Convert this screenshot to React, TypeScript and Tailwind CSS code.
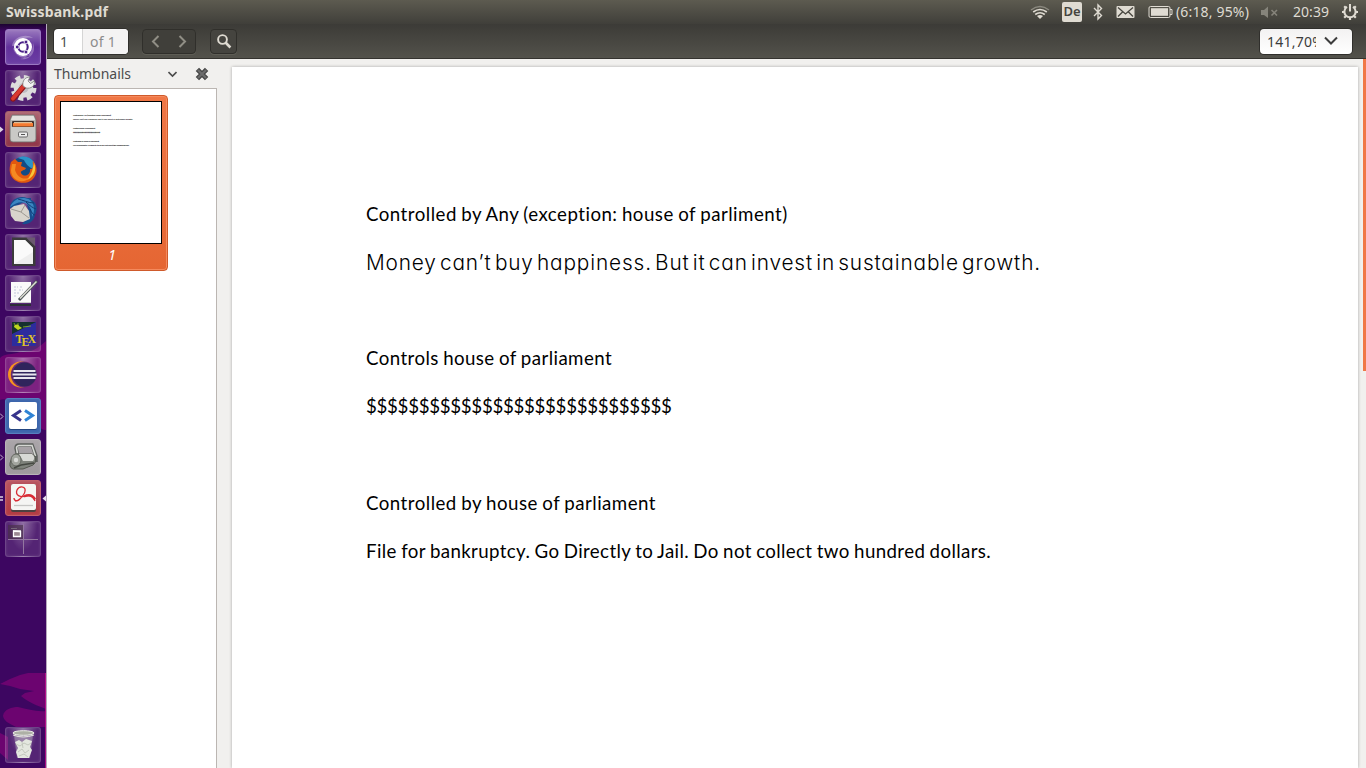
import React, { useLayoutEffect, useRef, useState } from "react";

/* Text that is tracked so that it fills an exact width. */
function FitText({ text, width, className = "" }: { text: string; width: number; className?: string }) {
  const ref = useRef<HTMLSpanElement>(null);
  const [spacing, setSpacing] = useState(0);
  useLayoutEffect(() => {
    if (!ref.current) return;
    const natural = ref.current.getBoundingClientRect().width - spacing * text.length;
    setSpacing((width - natural) / text.length);
  }, [text, width]);
  return (
    <span ref={ref} className={`inline-block whitespace-pre ${className}`} style={{ letterSpacing: `${spacing}px` }}>
      {text}
    </span>
  );
}

const tile =
  "relative flex h-9 w-9 shrink-0 items-center justify-center rounded-[3px] border shadow-[inset_0_0_3px_rgba(255,255,255,0.12)]";
const plain = "border-white/15 bg-[radial-gradient(ellipse_at_50%_0%,rgba(255,255,255,0.42),rgba(255,255,255,0.12)_60%,rgba(255,255,255,0.12))]";

function Tile({ look = plain, children, left, right }: { look?: string; children: React.ReactNode; left?: "solid" | "hollow" | "double"; right?: boolean }) {
  return (
    <div className={`${tile} ${look}`}>
      <svg className="h-[34px] w-[34px]" viewBox="0 0 34 34">{children}</svg>
      {left && (
        <svg className="absolute -left-1.5 top-[14px] h-[7px] w-[4px]" viewBox="0 0 4 7">
          {left === "solid" && <path d="M0 .5 3.5 3.5 0 6.5Z" fill="#ddd5e2" />}
          {left === "hollow" && <path d="M0 .5 3 3.5 0 6.5" fill="none" stroke="#c5b3cf" />}
          {left === "double" && <path d="M0 2h3M0 5h3" stroke="#ddd5e2" strokeWidth="1.6" />}
        </svg>
      )}
      {right && (
        <svg className="absolute -right-[6px] top-[14px] h-[7px] w-[4px]" viewBox="0 0 4 7">
          <path d="M4 .5 .5 3.5 4 6.5Z" fill="#e8e0ee" />
        </svg>
      )}
    </div>
  );
}

function Launcher() {
  return (
    <aside className="relative flex w-[47px] shrink-0 flex-col gap-[5px] overflow-hidden border-r border-[#b7a9bd] bg-[#3d0661] pl-[5px] pt-[5px] pb-[5px]">
      <svg className="absolute inset-0 h-[744px] w-[46px]" viewBox="0 24 46 744">
        <defs>
          <linearGradient id="shade" x1="0" y1="0" x2="0" y2="1">
            <stop offset="0" stopColor="#1c0330" />
            <stop offset="1" stopColor="#1c0330" stopOpacity="0" />
          </linearGradient>
        </defs>
        <rect y="24" width="46" height="7" fill="url(#shade)" />
        <path d="M46 341C36 350 30 353 20 352C12 355 4 353 0 358V400C10 396 20 410 34 420C38 425 42 431 46 430Z" fill="#6c0470" />
        <path d="M0 684 10 679 20 675 28 673H46V709C38 706 28 702 21 696L25 693 34 691 20 689 10 686Z" fill="#6c0470" />
        <path d="M3 716C4 709 12 707 18 707C28 709 36 712 46 711V727H16C8 723 4 721 3 716ZM0 733 8 737V760L0 753Z" fill="#6c0470" />
        <path d="M45.5 673V768" stroke="#c4138e" opacity=".8" />
      </svg>

      <Tile look="border-[#9a78c2] bg-gradient-to-b from-[#9a78be] via-[#62309b] to-[#6c3fa4]">
        <path d="M6 16C7 7 20 3 27 8C21 6 13 9 11 16M27 13C31 23 23 31 14 29C22 28 27 22 27 13M7 18C9 26 17 30 24 26" fill="#fff" opacity=".3" />
        <circle cx="17" cy="17" r="9" fill="#fff" />
        <circle cx="17" cy="17" r="4.7" fill="none" stroke="#4a2188" strokeWidth="2.1" />
        <g fill="#4a2188" stroke="#fff" strokeWidth=".8">
          <circle cx="11.2" cy="17" r="1.9" /><circle cx="20" cy="12" r="1.9" /><circle cx="20" cy="22" r="1.9" />
        </g>
      </Tile>

      <Tile>
        <circle cx="17.5" cy="17" r="10.5" fill="none" stroke="#dcdcdc" strokeWidth="5" strokeDasharray="4.9 3.35" />
        <circle cx="17.5" cy="17" r="9.8" fill="#ddd" /><circle cx="17.5" cy="17" r="5" fill="#bfbfc4" />
        <path d="M7 28 19 14" stroke="#8b1419" strokeWidth="5.4" strokeLinecap="round" />
        <path d="M7 27.5 18.5 14" stroke="#d9382f" strokeWidth="3.8" strokeLinecap="round" />
        <path d="M17 15C16 10 19 6 24 6L22 10 24.5 12.5 28.5 10C29 15 25 18 20 17Z" fill="#f3f3f3" stroke="#777" strokeWidth=".8" />
      </Tile>

      <Tile left="solid" look="border-[#a3606c] bg-gradient-to-b from-[#ad6672] to-[#8f3347]">
        <path d="M6 3H28L30 8V27Q30 30 27 30H7Q4 30 4 27V8Z" fill="#b8b8b5" stroke="#70706d" strokeWidth=".7" />
        <path d="M6.5 4H27.5L29 8H5Z" fill="#e3e3df" />
        <rect x="6" y="9" width="22" height="6" rx="1" fill="#42332d" />
        <path d="M7 14.5V11H27V14.5" fill="#f47a31" /><path d="M8 10.7H26" stroke="#ffe0b4" />
        <path d="M5 15H29V27Q29 29 27 29H7Q5 29 5 27Z" fill="#c9c9c6" />
        <rect x="12.5" y="20" width="9" height="5" rx="1.2" fill="#eee" stroke="#666" /><path d="M15 22.5h4" stroke="#555" />
      </Tile>

      <Tile>
        <circle cx="17.5" cy="16.5" r="12.8" fill="#124b85" />
        <path d="M12 5C18 1 30 5 30 16C26 17 20 12 18 7Z" fill="#2b93c8" />
        <path d="M5 9 9 6 12 9 16 9 15 13 20 15C19 18 14 17 15 20C18 25 25 22 24 16C29 17 26 8 27 8C31 13 33 20 26 27C18 33 6 29 4 20C3 16 4 12 5 9Z" fill="#e2580f" />
        <path d="M28 10C31 17 28 24 21 27C26 21 27 15 28 10Z" fill="#f9c638" />
        <path d="M6 11 10 11 9 17C11 24 18 28 24 24C18 32 5 28 5 17Z" fill="#f58a22" />
      </Tile>

      <Tile>
        <path d="M4 14C4 5 14 1 21 4L25 4 25 6C29 7 33 13 29 21C28 27 23 31 16 30C20 26 23 24 23 18L20 7 8 13Z" fill="#174f90" />
        <path d="M4 13C8 4 17 2 24 6C29 10 29 18 26 23C26 16 24 11 19 9C14 7 10 9 4 13Z" fill="#3b86c2" />
        <path d="M4 15 8 12 18 10 23 17 24 25 17 28 9 27 5 22Z" fill="#d8d4cc" />
        <path d="M5 15 15 18 19 11M15 18 23 24" fill="none" stroke="#9d9992" />
        <path d="M12 5C17 6 22 9 28 9M20 8C24 12 27 14 30 15M24 15C26 19 27 21 29 21" stroke="#123c75" fill="none" />
      </Tile>

      <Tile>
        <path d="M6 2.5H21L29.5 11V31H6Z" fill="#3b3b3b" />
        <path d="M8 5H19L27 13V29H8Z" fill="#eee" />
        <path d="M20 2.5H29V11Z" fill="#6b5a70" />
        <path d="M8 5H19L27 13V17L8 29Z" fill="#fafafa" />
      </Tile>

      <Tile>
        <path d="M5 6H25V27H5Z" fill="#fafafa" /><path d="M4 28H25V30H4Z" fill="#2c2f37" />
        <path d="M4 26.5H25" stroke="#ccc" />
        <path d="M8 11h4m2 0h3m-9 3h3m2 0h4m-9 3h5m-5 3h3" stroke="#c2c5d9" strokeWidth="1.1" strokeDasharray="2 1" />
        <path d="M13 24 31 5" stroke="#4b5255" strokeWidth="3" /><path d="M14 22.5 30.5 5.5" stroke="#dcddd4" strokeWidth="1.5" />
      </Tile>

      <Tile>
        <rect x="6" y="5" width="24" height="24" fill="#2c2c9e" /><path d="M6 5H30L24 8 16 12 6 17Z" fill="#16302f" />
        <path d="M8 10C8 7 13 7 13 9L16 11 12 13Z" fill="#bed51f" /><path d="M8 6 9 8M17 10 25 9M12 6 12 8" stroke="#8cba20" strokeWidth=".8" />
        <g fill="#e3c425" fontFamily="Liberation Serif, serif" fontWeight="bold" fontSize="11.5"><text x="9.5" y="26">T</text><text x="15.6" y="29">E</text><text x="21.8" y="26">X</text></g>
      </Tile>

      <Tile>
        <circle cx="15" cy="16.5" r="13" fill="#f7941e" /><circle cx="17.8" cy="16.5" r="13" fill="#6b2a72" />
        <circle cx="18.5" cy="16.5" r="12" fill="#30245c" />
        <path d="M7.5 13H29.5M6.5 16.5H30.5M7.5 20H29.5" stroke="#e7e4ed" strokeWidth="1.8" />
      </Tile>

      <Tile left="hollow" look="border-[#557fc0] bg-[#3c65ac]">
        <rect x="3" y="4" width="28" height="27" rx="2" fill="#23457f" /><rect x="3" y="3" width="28" height="27" rx="2" fill="#fff" />
        <path d="M15 11.5 7.5 16.5 15 21.5" fill="none" stroke="#37358c" strokeWidth="3" /><path d="M19 11.5 26.5 16.5 19 21.5" fill="none" stroke="#2f83d5" strokeWidth="3" />
      </Tile>

      <Tile left="hollow" look="border-[#b9b4b8] bg-gradient-to-b from-[#aaa5a9] to-[#9e999d]">
        <path d="M12 17 10 8Q10 5 13 5H26L30 16V22" fill="none" stroke="#5d605d" strokeWidth="3.5" />
        <path d="M12 17 10.5 8Q10.5 6 13 5.5H26L29.5 16" fill="none" stroke="#d5d7d3" strokeWidth="1.6" />
        <path d="M7 17Q8 13 13 14H26Q31 16 29 23L27 25 17 29H7Q2 27 5 20Z" fill="#7e827b" stroke="#555850" />
        <path d="M13 14H26Q30 17 27 21H17Z" fill="#d8d9d5" /><ellipse cx="10" cy="20" rx="5" ry="6" fill="#a3a69f" stroke="#656861" />
        <circle cx="10" cy="20" r="2.2" fill="#d9dad7" /><path d="M8 28 15 25 28 23" stroke="#454842" strokeWidth="1.5" fill="none" />
      </Tile>

      <Tile left="double" right look="border-[#c2606a] bg-gradient-to-b from-[#b75360] to-[#b33a42]">
        <rect x="5" y="3" width="25" height="28" rx="2" fill="#4d4140" /><rect x="5" y="3" width="25" height="26" rx="2" fill="#f5f5f3" />
        <path d="M9 20C13 20 20 13 19 8C18 5 13 5 11 9C9 14 14 17 20 15C25 14 28 17 29 20M8 17C8 20 12 21 14 18" fill="none" stroke="#d92c35" strokeWidth="1.3" />
        <path d="M18 15.5C23 13 27 14 29 18.5" stroke="#d92c35" strokeWidth="2.4" fill="none" /><path d="M8 24.5h19" stroke="#c7c7c5" strokeWidth="1.3" />
      </Tile>

      <Tile>
        <rect x="2" y="3" width="15" height="14" fill="#483146" opacity=".65" />
        <path d="M17.5 2V32M2 17.5H32" stroke="#9377a0" />
        <path d="M5 6.5h6" stroke="#766679" /><path d="M7.5 9V14.5H14.5V9.5Z" fill="#9b8992" stroke="#fff" strokeWidth="1.3" /><path d="M7 9.2h8" stroke="#fff" strokeWidth="1.8" />
      </Tile>

      <div className="mt-auto">
        <Tile>
          <path d="M8 7 11 30H24L27 7Z" fill="#d8ddd3" opacity=".35" />
          <ellipse cx="17.5" cy="5" rx="10.5" ry="2.3" fill="#aeb0a6" stroke="#edf0e8" /><path d="M7 7Q17 11 28 7" stroke="#e7e9e0" fill="none" />
          <path d="M9 14 13 12 16 14 20 11 26 13 24 19 26 22 23 30 12 30 10 24 12 20Z" fill="#e4e7df" />
          <path d="M10 16 14 18 18 15 22 17 25 15M12 24 16 21 19 25 23 22M16 14 17 20M13 28 18 26 22 29" stroke="#c3c8bd" fill="none" />
        </Tile>
      </div>
    </aside>
  );
}

function TopPanel() {
  return (
    <header className="flex h-6 shrink-0 items-center bg-gradient-to-b from-[#5d5b50] to-[#403f3a] pl-1.5 text-[#dfdbd2]">
      <FitText text="Swissbank.pdf" width={102} className="text-[14px] leading-6 font-bold" />
      <div className="ml-auto flex h-6 items-center">
        <svg className="h-6 w-[22px]" viewBox="1029 0 22 24" fill="none" stroke="#dfdbd2">
          <path d="M1031 10Q1040 3 1049 10" stroke="#8b897f" strokeWidth="1.5" />
          <path d="M1033.2 12Q1040 7 1046.8 12M1035.2 14.5Q1040 11 1044.8 14.5" strokeWidth="1.7" />
          <path d="M1037 16Q1040 14 1043 16L1040 19Z" fill="#dfdbd2" stroke="none" />
        </svg>
        <span className="ml-[11px] flex h-5 w-5 items-center justify-center rounded-[2px] bg-[#dfdbd2] text-[13px] font-semibold text-[#45443f]">De</span>
        <svg className="ml-[11px] h-6 w-[10px]" viewBox="0 0 10 24" fill="none" stroke="#dfdbd2" strokeWidth="1.4">
          <path d="M1 8 8.5 15.5 5 19V5L8.5 8.5 1 16" />
        </svg>
        <svg className="ml-[13px] h-6 w-[19px]" viewBox="0 0 19 24">
          <rect x=".5" y="6" width="18" height="12" rx="1" fill="#dfdbd2" />
          <path d="M2 7.5 9.5 14 17 7.5M2 16.5 6.5 12M17 16.5 12.5 12" fill="none" stroke="#47463f" strokeWidth="1.3" />
        </svg>
        <svg className="ml-[13px] h-6 w-[25px]" viewBox="0 0 25 24">
          <rect x="1" y="6.5" width="21" height="11" rx="1.5" fill="none" stroke="#dfdbd2" />
          <rect x="3" y="8.2" width="17" height="7.6" fill="#dfdbd2" /><path d="M22 9.5h2v5h-2" fill="none" stroke="#dfdbd2" />
        </svg>
        <FitText text="(6:18, 95%)" width={73} className="ml-[3px] text-[14px] leading-6" />
        <svg className="ml-[12px] h-6 w-[19px]" viewBox="0 0 19 24">
          <path d="M0 10H3L7 6.5V18L3 15H0Z" fill="#86847b" /><path d="M10.5 10 16 15.5M16 10 10.5 15.5" stroke="#86847b" strokeWidth="1.6" />
        </svg>
        <FitText text="20:39" width={36} className="ml-[13px] text-[14px] leading-6" />
        <svg className="ml-[12px] mr-[7px] h-6 w-[18px]" viewBox="0 0 18 24" fill="none" stroke="#dfdbd2">
          <path d="M6 6.9A5.6 5.6 0 1 0 12 6.9" strokeWidth="2" /><path d="M9 4V11.5" strokeWidth="2" />
          <path d="M1 12H4M14 12H17M3.2 17.8 5 16M14.8 17.8 13 16M3.2 6.2 5 8M14.8 6.2 13 8M9 17V20" strokeWidth="2.2" />
        </svg>
      </div>
    </header>
  );
}

function Toolbar() {
  return (
    <div className="flex h-[35px] shrink-0 items-center border-b border-[#34332f] bg-gradient-to-b from-[#3c3b37] to-[#53524b] pl-[7px] pr-[14px] text-[14px]">
      <div className="flex h-[25px] w-[74px] overflow-hidden rounded-[4px] bg-white text-[#4c4c4c] shadow-[0_0_0_1px_#302f2c]">
        <span className="w-[29px] border-r border-[#d5d5d5] pl-1.5 leading-[25px]">1</span>
        <span className="flex-1 bg-[#f4f3f3] pl-[7px] leading-[25px] text-[#8c8c8c]"><FitText text="of 1" width={26} /></span>
      </div>
      <div className="ml-[14px] flex h-[25px] w-[54px] items-center rounded-[4px] border border-[#302f2b] bg-[#403f3a] shadow-[0_1px_0_#5e5d55]">
        <svg className="h-[23px] w-[52px]" viewBox="0 0 52 23" fill="none" stroke="#908e85" strokeWidth="2"><path d="M15.5 6 10 11.5 15.5 17M36.5 6 42 11.5 36.5 17" /></svg>
      </div>
      <div className="ml-[14px] flex h-[25px] w-[27px] items-center justify-center rounded-[4px] border border-[#302f2b] bg-[#45443f] shadow-[0_1px_0_#5e5d55]">
        <svg className="h-[23px] w-[25px]" viewBox="0 0 25 23" fill="none" stroke="#dfdbd2"><circle cx="11.5" cy="9.5" r="4.4" strokeWidth="1.9" /><path d="M14.5 12.5 19.4 17.5" strokeWidth="2.6" /></svg>
      </div>
      <div className="ml-auto flex h-[25px] w-[92px] items-center rounded-[4px] bg-gradient-to-b from-[#f3f2f2] to-white pl-[7px] text-[#3c3c3c] shadow-[0_0_0_1px_#302f2c]">
        <span className="w-[49px] overflow-hidden leading-[25px]"><FitText text="141,70%" width={57} /></span>
        <svg className="ml-[8px] h-[12px] w-[14px]" viewBox="0 0 14 12" fill="none" stroke="#3c3c3c" strokeWidth="2"><path d="M1 2.5 7 8.5 13 2.5" /></svg>
      </div>
    </div>
  );
}

const thumbLines: [string, number, string][] = [
  ["Controlled by Any (exception: house of parliment)", 38, "h-[4px]"],
  ["Money can’t buy happiness. But it can invest in sustainable growth.", 60, "h-[9px]"],
  ["Controls house of parliament", 22, "h-[4px]"],
  ["$$$$$$$$$$$$$$$$$$$$$$$$$$$$$", 27, "h-[9px]"],
  ["Controlled by house of parliament", 26, "h-[4px]"],
  ["File for bankruptcy. Go Directly to Jail. Do not collect two hundred dollars.", 56, "h-[4px]"],
];

function Sidebar() {
  return (
    <div className="flex w-[170px] shrink-0 flex-col">
      <div className="flex h-[29px] shrink-0 items-center pl-[7px] text-[14px] text-[#4c4c4c]">
        <FitText text="Thumbnails" width={77} />
        <svg className="ml-[37px] h-[8px] w-[9px]" viewBox="0 0 9 8" fill="none" stroke="#4c4c4c" strokeWidth="1.6"><path d="M.5 2 4.5 6 8.5 2" /></svg>
        <svg className="ml-[18px] h-[14px] w-[14px]" viewBox="0 0 13 13"><path d="M2.2 2.2 10.8 10.8M10.8 2.2 2.2 10.8" stroke="#474747" strokeWidth="4.4" /><path d="M2.7 2.7 10.3 10.3M10.3 2.7 2.7 10.3" stroke="#6c6c6c" strokeWidth="2" /></svg>
      </div>
      <div className="flex-1 border-t border-r border-[#bbb6b2] bg-white pl-[7px] pt-[6px]">
        <div className="flex h-[176px] w-[114px] flex-col items-center rounded-[4px] border border-[#cf5a2b] bg-gradient-to-b from-[#f07746] to-[#e56633] pt-[5px] shadow-[inset_0_0_0_1px_#f58a5d]">
          <div className="h-[143px] w-[102px] shrink-0 border border-black bg-white pl-[12px] pt-[11px]">
            {thumbLines.map(([text, width, height]) => (
              <div key={text} className={`flex ${height}`}>
                <FitText text={text} width={width} className="font-['Lato',sans-serif] text-[2px] leading-[4px] font-bold text-black" />
              </div>
            ))}
          </div>
          <span className="pl-[2px] text-[14px] leading-[21px] text-white italic">1</span>
        </div>
      </div>
    </div>
  );
}

const calibri = "font-['Lato',sans-serif] text-[18.7px] [word-spacing:-0.8px]";
const gothic = "relative top-px font-['Inter',sans-serif] text-[20.8px] font-light [font-feature-settings:'cv11'] [word-spacing:-3.5px]";

function Viewer() {
  return (
    <main className="relative flex min-w-0 flex-1 pl-[15px] pt-2">
      <article className="h-full w-[1126px] bg-white pl-[134px] pt-[123px] leading-[48px] text-black shadow-[0_0_3px_rgba(0,0,0,0.3)]">
        <p className="h-12"><FitText text="Controlled by Any (exception: house of parliment)" width={422} className={calibri} /></p>
        <p className="h-24"><FitText text="Money can’t buy happiness. But it can invest in sustainable growth." width={675} className={gothic} /></p>
        <p className="h-12"><FitText text="Controls house of parliament" width={246} className={calibri} /></p>
        <p className="h-[97px]"><FitText text="$$$$$$$$$$$$$$$$$$$$$$$$$$$$$" width={305.5} className={calibri} /></p>
        <p className="h-12"><FitText text="Controlled by house of parliament" width={290} className={calibri} /></p>
        <p className="h-12"><FitText text="File for bankruptcy. Go Directly to Jail. Do not collect two hundred dollars." width={625} className={calibri} /></p>
      </article>
      <div className="absolute right-0 top-0 h-[312px] w-[3px] bg-[#f07746]" />
    </main>
  );
}

export default function App() {
  return (
    <div className="flex h-[768px] w-[1366px] flex-col overflow-hidden bg-[#f1f0ee] font-['Noto_Sans','Open_Sans',sans-serif]">
      <TopPanel />
      <div className="flex min-h-0 flex-1">
        <Launcher />
        <div className="flex min-w-0 flex-1 flex-col">
          <Toolbar />
          <div className="flex min-h-0 flex-1">
            <Sidebar />
            <Viewer />
          </div>
        </div>
      </div>
    </div>
  );
}
